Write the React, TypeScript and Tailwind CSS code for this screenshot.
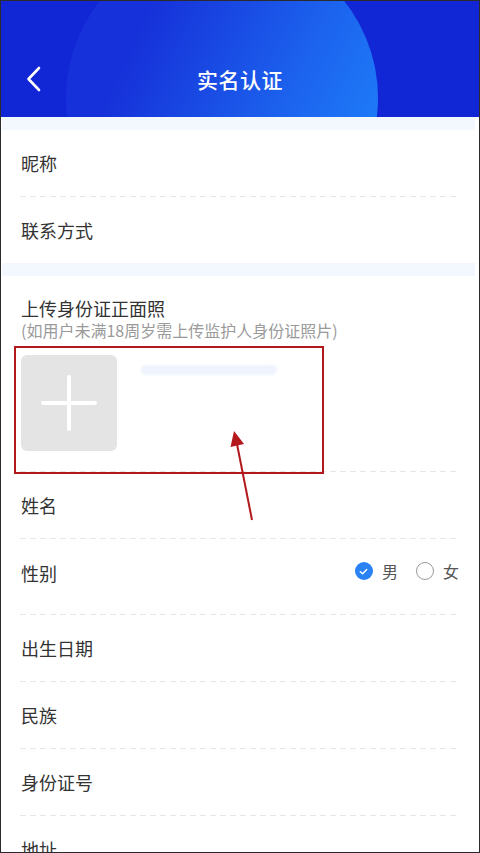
import React from "react";

const font = { fontFamily: '"Noto Sans CJK SC", "Noto Sans", sans-serif' };

function Divider() {
  return (
    <div className="mx-[19px] h-px bg-[linear-gradient(to_right,#e6e6e6_60%,transparent_60%)] bg-[length:10px_1px] bg-repeat-x" />
  );
}

function Row({ label, h = "h-[66px]" }: { label: string; h?: string }) {
  return (
    <div className={`flex items-center px-[20px] ${h}`}>
      <span className="text-[18px] leading-none text-[#333333]">{label}</span>
    </div>
  );
}

function Strip() {
  return <div className="h-[13px] bg-[#f3f7fe] ml-[1px] mr-[4px]" />;
}

export default function App() {
  return (
    <div
      className="relative w-[480px] h-[853px] overflow-hidden border border-[#2b2b2b] bg-white"
      style={font}
    >
      {/* Header */}
      <div className="relative h-[116px] overflow-hidden bg-[#1126d5]">
        <div className="absolute left-[65px] top-[-59px] w-[312px] h-[312px] rounded-full bg-[linear-gradient(115deg,#1631d9_25%,#1c63ee_65%,#1e84fb_95%)]" />
        <div className="relative flex h-full items-center justify-center pt-[42px]">
          <svg
            className="absolute left-[24px] top-[64px]"
            width="18"
            height="28"
            viewBox="0 0 18 28"
            fill="none"
          >
            <path d="M14 3 L3.5 14 L14 25" stroke="white" strokeWidth="2.6" strokeLinecap="round" strokeLinejoin="round" />
          </svg>
          <span className="text-[21px] font-medium text-white tracking-[0.5px]">实名认证</span>
        </div>
      </div>
      <Strip />

      <Row label="昵称" />
      <Divider />
      <Row label="联系方式" />
      <Strip />

      {/* Upload section */}
      <div className="px-[20px] pt-[21px]">
        <div className="text-[18px] leading-[22px] text-[#333333]">上传身份证正面照</div>
        <div className="text-[16px] leading-[22px] text-[#9a9a9a]">(如用户未满18周岁需上传监护人身份证照片)</div>
        <div className="flex items-start pt-[14px] pb-[20px]">
          <div className="relative w-[96px] h-[96px] rounded-[6px] bg-[#e4e4e4] flex items-center justify-center">
            <div className="absolute w-[56px] h-[4px] rounded-full bg-white" />
            <div className="absolute w-[4px] h-[56px] rounded-full bg-white" />
          </div>
          <div className="ml-[24px] mt-[10px] w-[136px] h-[10px] rounded-full bg-[#eef3fd] blur-[1px]" />
        </div>
      </div>
      <Divider />
      <Row label="姓名" />
      <Divider />
      <div className="flex items-start px-[20px] h-[75px] pt-[23px]">
        <span className="text-[18px] leading-[22px] text-[#333333]">性别</span>
        <div className="ml-auto flex items-center">
          <div className="w-[18px] h-[18px] rounded-full bg-[#2a82f5] flex items-center justify-center">
            <svg width="11" height="11" viewBox="0 0 12 12" fill="none">
              <path d="M2.5 6.2 L5 8.5 L9.5 3.8" stroke="white" strokeWidth="1.6" strokeLinecap="round" strokeLinejoin="round" />
            </svg>
          </div>
          <span className="ml-[9px] text-[16px] leading-none text-[#555555]">男</span>
          <div className="ml-[18px] w-[18px] h-[18px] rounded-full border border-[#999999]" />
          <span className="ml-[9px] text-[16px] leading-none text-[#555555]">女</span>
        </div>
      </div>
      <Divider />
      <Row label="出生日期" />
      <Divider />
      <Row label="民族" />
      <Divider />
      <Row label="身份证号" />
      <Divider />
      <Row label="地址" />

      {/* Red annotation overlay */}
      <div className="absolute left-[13px] top-[345px] w-[310px] h-[128px] border-2 border-[#b3181c]" />
      <svg className="absolute left-0 top-0 pointer-events-none" width="480" height="853">
        <line x1="251" y1="519" x2="235" y2="438" stroke="#b3181c" strokeWidth="2" />
        <polygon points="233,430 229.5,446 243,443" fill="#b3181c" />
      </svg>
    </div>
  );
}
